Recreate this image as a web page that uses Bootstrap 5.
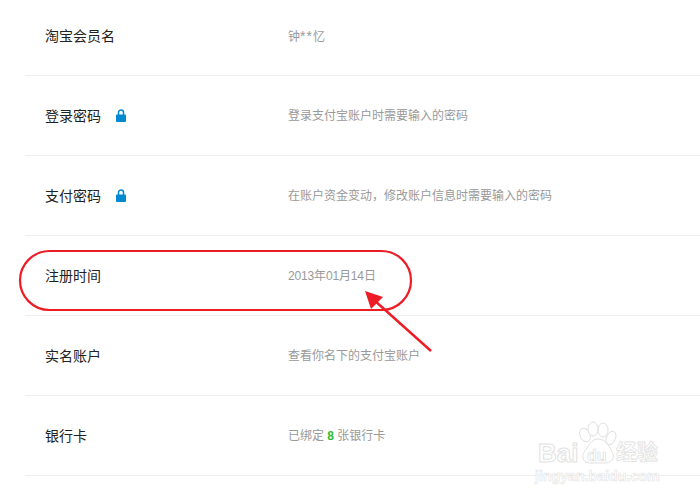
<!DOCTYPE html>
<html lang="zh-CN">
<head>
    <meta charset="UTF-8">
    <meta name="viewport" content="width=device-width, initial-scale=1.0">
    <title>基本信息</title>
    <link href="https://cdn.jsdelivr.net/npm/bootstrap@5.3.0/dist/css/bootstrap.min.css" rel="stylesheet">
    <style>
        body {
            font-family: "Liberation Sans", "Noto Sans CJK SC", sans-serif;
            background: #fff;
            overflow: hidden;
        }
        .info-list {
            margin-left: 25px;
            margin-top: -4px;
        }
        .info-row {
            height: 80px;
            border-bottom: 1px solid #eeeeee;
            padding-left: 20px;
            padding-top: 1px;
        }
        .info-label {
            width: 243px;
            font-size: 14px;
            color: #222;
            flex-shrink: 0;
        }
        .info-desc {
            font-size: 12px;
            color: #999;
        }
        .star-mask {
            font-size: 14px;
            letter-spacing: 1px;
        }
        .date-text {
            letter-spacing: -.15px;
        }
        .lock-icon {
            width: 10px;
            height: 13px;
            margin-left: 15px;
            margin-bottom: 2px;
        }
        .count-num {
            color: #2dbb2d;
            font-weight: 700;
        }
        .mark-layer {
            position: absolute;
            left: 0;
            top: 0;
            pointer-events: none;
        }
        .wm-bai {
            position: absolute;
            left: 538px;
            top: 438px;
            font-size: 26px;
            line-height: 30px;
            font-weight: 700;
            color: #fff;
            -webkit-text-stroke: 1px #e2e2e2;
        }
        .wm-jing {
            position: absolute;
            left: 616px;
            top: 439px;
            font-size: 21px;
            line-height: 26px;
            font-weight: 700;
            color: #fff;
            -webkit-text-stroke: .8px #e2e2e2;
        }
        .wm-url {
            position: absolute;
            left: 535px;
            top: 468px;
            font-size: 14.2px;
            line-height: 16px;
            font-weight: 700;
            color: #fff;
            -webkit-text-stroke: .6px #e4e4e4;
        }
        .wm-du {
            position: absolute;
            left: 587px;
            top: 448px;
            font-size: 16px;
            line-height: 16px;
            font-weight: 700;
            color: #fff;
            -webkit-text-stroke: .7px #dedede;
        }
    </style>
</head>
<body>
    <div class="info-list">
        <div class="info-row d-flex align-items-center">
            <div class="info-label">淘宝会员名</div>
            <div class="info-desc">钟<span class="star-mask">**</span>忆</div>
        </div>
        <div class="info-row d-flex align-items-center">
            <div class="info-label d-flex align-items-center">登录密码
                <svg class="lock-icon" viewBox="0 0 10 13"><path d="M2.5 7V3.6a2.5 2.5 0 0 1 5 0V7" fill="none" stroke="#0088d0" stroke-width="1.5"/><rect y="5.5" width="10" height="7.5" rx="1" fill="#0088d0"/></svg>
            </div>
            <div class="info-desc">登录支付宝账户时需要输入的密码</div>
        </div>
        <div class="info-row d-flex align-items-center">
            <div class="info-label d-flex align-items-center">支付密码
                <svg class="lock-icon" viewBox="0 0 10 13"><path d="M2.5 7V3.6a2.5 2.5 0 0 1 5 0V7" fill="none" stroke="#0088d0" stroke-width="1.5"/><rect y="5.5" width="10" height="7.5" rx="1" fill="#0088d0"/></svg>
            </div>
            <div class="info-desc">在账户资金变动，修改账户信息时需要输入的密码</div>
        </div>
        <div class="info-row d-flex align-items-center">
            <div class="info-label">注册时间</div>
            <div class="info-desc date-text">2013年01月14日</div>
        </div>
        <div class="info-row d-flex align-items-center">
            <div class="info-label">实名账户</div>
            <div class="info-desc">查看你名下的支付宝账户</div>
        </div>
        <div class="info-row d-flex align-items-center">
            <div class="info-label">银行卡</div>
            <div class="info-desc">已绑定 <span class="count-num">8</span> 张银行卡</div>
        </div>
    </div>

    <!-- red annotation -->
    <svg class="mark-layer" width="700" height="500">
        <rect x="20" y="251" width="391" height="59" rx="29.5" fill="none" stroke="#ed1c24" stroke-width="2.2"/>
        <path d="M431 351 L374 300" stroke="#ed1c24" stroke-width="2.4" fill="none"/>
        <path d="M365 291 L383 297 L371 309 Z" fill="#ed1c24"/>
    </svg>

    <!-- watermark -->
    <svg class="mark-layer" width="700" height="500">
        <g fill="#fff" stroke="#e0e0e0" stroke-width="1">
            <ellipse cx="585" cy="435" rx="5" ry="7" transform="rotate(-25 585 435)"/>
            <ellipse cx="593" cy="429" rx="5" ry="7"/>
            <ellipse cx="603" cy="430" rx="5" ry="7"/>
            <ellipse cx="611" cy="438" rx="4.5" ry="7" transform="rotate(25 611 438)"/>
            <path d="M598 439c6 0 9 4 12 9 3 5 4 7 3 10-1 4-5 5-9 5h-13c-4 0-7-1-8-5-1-3 1-6 4-10 3-5 6-9 11-9z"/>
        </g>
    </svg>
    <div class="wm-bai">Bai</div>
    <div class="wm-du">du</div>
    <div class="wm-jing">经验</div>
    <div class="wm-url">jingyan.baidu.com</div>

    <script src="https://cdn.jsdelivr.net/npm/bootstrap@5.3.0/dist/js/bootstrap.bundle.min.js"></script>
</body>
</html>
